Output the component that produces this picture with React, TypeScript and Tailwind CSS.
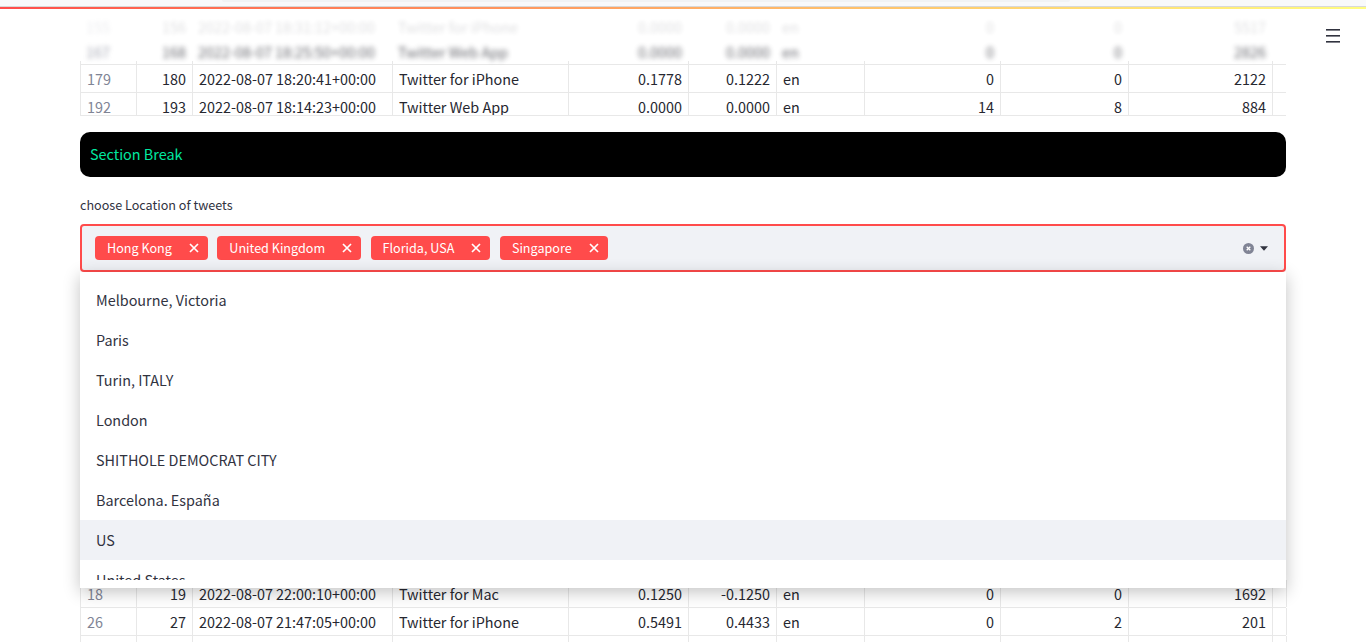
const FONT = "font-['Noto_Sans_CJK_JP','Noto_Sans',sans-serif]"

type Row = {
  idx: string
  id: string
  date: string
  source: string
  a: string
  b: string
  lang: string
  c: string
  d: string
  e: string
}

const TOP_ROWS: Row[] = [
  { idx: '179', id: '180', date: '2022-08-07 18:20:41+00:00', source: 'Twitter for iPhone', a: '0.1778', b: '0.1222', lang: 'en', c: '0', d: '0', e: '2122' },
  { idx: '192', id: '193', date: '2022-08-07 18:14:23+00:00', source: 'Twitter Web App', a: '0.0000', b: '0.0000', lang: 'en', c: '14', d: '8', e: '884' },
]

const BLUR_ROW: Row = { idx: '167', id: '168', date: '2022-08-07 18:25:50+00:00', source: 'Twitter Web App', a: '0.0000', b: '0.0000', lang: 'en', c: '0', d: '0', e: '2826' }
const FAINT_ROW: Row = { idx: '155', id: '156', date: '2022-08-07 18:31:12+00:00', source: 'Twitter for iPhone', a: '0.0000', b: '0.0000', lang: 'en', c: '0', d: '0', e: '5517' }
const EMPTY_ROW: Row = { idx: '', id: '', date: '', source: '', a: '', b: '', lang: '', c: '', d: '', e: '' }

const BOTTOM_ROWS: Row[] = [
  { idx: '18', id: '19', date: '2022-08-07 22:00:10+00:00', source: 'Twitter for Mac', a: '0.1250', b: '-0.1250', lang: 'en', c: '0', d: '0', e: '1692' },
  { idx: '26', id: '27', date: '2022-08-07 21:47:05+00:00', source: 'Twitter for iPhone', a: '0.5491', b: '0.4433', lang: 'en', c: '0', d: '2', e: '201' },
]

const TAGS = ['Hong Kong', 'United Kingdom', 'Florida, USA', 'Singapore']

const OPTIONS = [
  'Melbourne, Victoria',
  'Paris',
  'Turin, ITALY',
  'London',
  'SHITHOLE DEMOCRAT CITY',
  'Barcelona. España',
  'US',
  'United States',
]

const CELL = 'px-[6px] border-r border-[#e8e8e8] truncate pt-[1px]'

function TableRow({ row, height, noLines }: { row: Row; height: string; noLines?: boolean }) {
  const cell = noLines ? 'px-[6px] truncate pt-[1px]' : CELL
  return (
    <div
      className={`grid grid-cols-[56px_56px_200px_176px_120px_88px_88px_136px_128px_144px_14px] items-stretch text-[14.4px] leading-[26px] text-[#262730] ${height} ${
        noLines ? '' : 'border-b border-[#e8e8e8] border-l'
      }`}
    >
      <div className={`${cell} text-[#808495]`}>{row.idx}</div>
      <div className={`${cell} text-right`}>{row.id}</div>
      <div className={cell}>{row.date}</div>
      <div className={cell}>{row.source}</div>
      <div className={`${cell} text-right`}>{row.a}</div>
      <div className={`${cell} text-right`}>{row.b}</div>
      <div className={cell}>{row.lang}</div>
      <div className={`${cell} text-right`}>{row.c}</div>
      <div className={`${cell} text-right`}>{row.d}</div>
      <div className={`${cell} text-right`}>{row.e}</div>
      <div className={noLines ? '' : 'border-r border-[#e8e8e8]'} />
    </div>
  )
}

function TagX() {
  return (
    <svg width="10" height="10" viewBox="0 0 10 10" fill="none" stroke="white" strokeWidth="1.7">
      <path d="M1 1 L9 9 M9 1 L1 9" />
    </svg>
  )
}

export default function App() {
  return (
    <div className={`${FONT} relative h-[642px] w-[1366px] overflow-hidden bg-white`}>
      {/* Browser strip and decoration bar */}
      <div className="h-[6px] bg-[#f8f9fb]">
        <div className="ml-[222px] h-[2px] w-[848px] rounded-b-[4px] bg-[#f1f3f5]" />
      </div>
      <div className="h-[3px] border-t border-[#d8d8d8] bg-gradient-to-r from-[#ff4b4b] to-[#fffd80]" />

      {/* Hamburger */}
      <div className="absolute left-[1326px] top-[29px] z-20">
        <svg width="14" height="14" viewBox="0 0 14 14" fill="#31333f">
          <rect x="0" y="0" width="14" height="1.6" />
          <rect x="0" y="6" width="14" height="1.6" />
          <rect x="0" y="12" width="14" height="1.6" />
        </svg>
      </div>

      <div className="px-[80px]">
        {/* Scrolled table */}
        <div className="relative h-[107px] overflow-hidden">
          <div className="pt-[4px]">
            <div className="opacity-15 blur-[2px]">
              <TableRow row={FAINT_ROW} height="h-[25px]" noLines />
            </div>
            <div className="opacity-70 blur-[2.5px]">
              <TableRow row={BLUR_ROW} height="h-[23px]" noLines />
            </div>
            <TableRow row={EMPTY_ROW} height="h-[4px]" />
          </div>
          {TOP_ROWS.map((r, i) => (
            <TableRow key={r.idx} row={r} height={i === 0 ? 'h-[28px]' : 'h-[23px]'} />
          ))}
        </div>

        {/* Section break */}
        <div className="mt-[16px] flex h-[45px] items-center rounded-[10px] bg-black px-[10px] pb-[1px] text-[14.4px] text-[#00e8a0]">
          Section Break
        </div>

        {/* Select */}
        <div className="mt-[19px] text-[12.6px] leading-[18px] text-[#31333f]">choose Location of tweets</div>
        <div className="relative mt-[10px]">
          <div className="flex h-[48px] items-center justify-between rounded-[4px] border-2 border-[#ff4b4b] bg-[#f0f2f6] pl-[13px] pr-[16px]">
            <div className="flex items-center gap-[9.5px]">
              {TAGS.map((t) => (
                <div
                  key={t}
                  className="flex h-[24px] items-center gap-[17px] rounded-[4px] bg-[#ff4b4b] pl-[12px] pr-[9px] text-[12.6px] text-white"
                >
                  <span>{t}</span>
                  <TagX />
                </div>
              ))}
            </div>
            <div className="flex items-center gap-[6px]">
              <svg width="11" height="11" viewBox="0 0 11 11">
                <circle cx="5.5" cy="5.5" r="5.5" fill="#808495" />
                <path d="M3.7 3.7 L7.3 7.3 M7.3 3.7 L3.7 7.3" stroke="white" strokeWidth="1.3" />
              </svg>
              <svg width="8" height="5" viewBox="0 0 8 5" fill="#31333f">
                <path d="M0 0.3 H8 L4 4.8 Z" />
              </svg>
            </div>
          </div>

          {/* Open dropdown */}
          <div className="absolute left-0 right-0 top-[48px] z-10 h-[316px] bg-white pb-[8px] pt-[8px] shadow-[0_4px_16px_rgba(0,0,0,0.24)]">
            <div className="h-[300px] overflow-hidden">
              {OPTIONS.map((o) => (
                <div
                  key={o}
                  className={`flex h-[40px] items-center px-[16px] text-[14.4px] text-[#31333f] ${
                    o === 'US' ? 'bg-[#f0f2f6]' : ''
                  }`}
                >
                  {o}
                </div>
              ))}
            </div>
          </div>
        </div>

        {/* Table under the dropdown */}
        <div className="mt-[307px] border-t border-[#e8e8e8]">
          {BOTTOM_ROWS.map((r) => (
            <TableRow key={r.idx} row={r} height="h-[28px]" />
          ))}
          <TableRow row={EMPTY_ROW} height="h-[28px]" />
        </div>
      </div>
    </div>
  )
}
